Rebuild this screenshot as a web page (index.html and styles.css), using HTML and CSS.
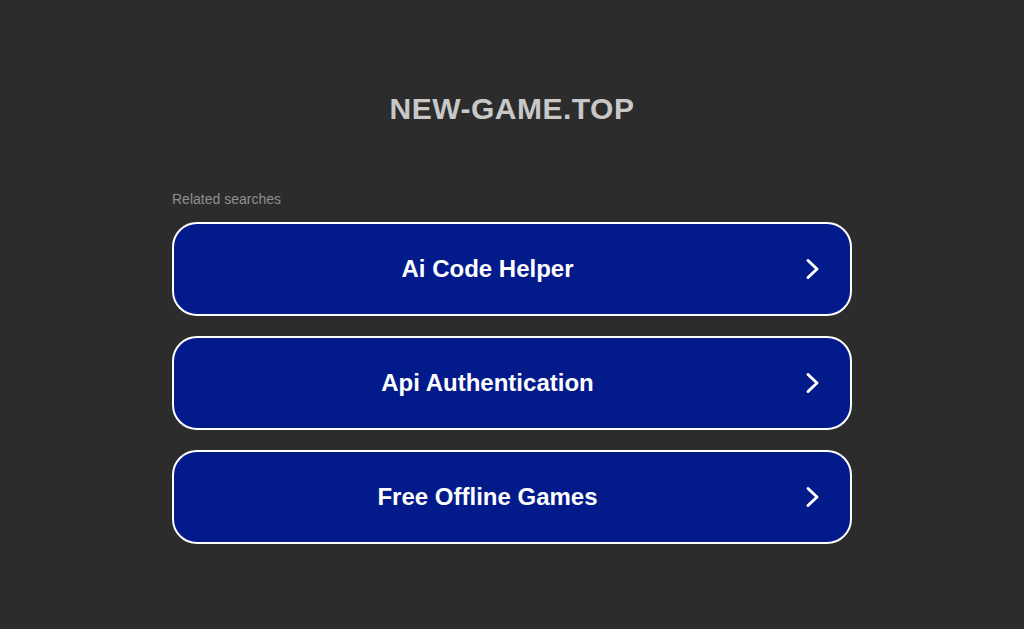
FILE: index.html
```html
<!DOCTYPE html>
<html lang="en">
<head>
  <meta charset="UTF-8">
  <title>new-game.top</title>
  <link rel="stylesheet" href="styles.css">
</head>
<body>

  <h1 class="domain">NEW-GAME.TOP</h1>

  <div class="related">
    <p class="related-title">Related searches</p>

    <a class="search-link" href="#">
      <span class="search-text">Ai Code Helper</span>
      <svg class="arrow" viewBox="0 0 24 24" width="24" height="24"><path d="M7 3.5 L16 12 L7 20.5" /></svg>
    </a>

    <a class="search-link" href="#">
      <span class="search-text">Api Authentication</span>
      <svg class="arrow" viewBox="0 0 24 24" width="24" height="24"><path d="M7 3.5 L16 12 L7 20.5" /></svg>
    </a>

    <a class="search-link" href="#">
      <span class="search-text">Free Offline Games</span>
      <svg class="arrow" viewBox="0 0 24 24" width="24" height="24"><path d="M7 3.5 L16 12 L7 20.5" /></svg>
    </a>
  </div>

</body>
</html>
```

FILE: styles.css
```css
body {
  margin: 0;
  background: #2c2c2c;
  font-family: Arial, "Liberation Sans", sans-serif;
}
.domain {
  margin: 0;
  padding-top: 90px;
  font-size: 30px;
  line-height: 37px;
  text-align: center;
  color: #c8c8c8;
  letter-spacing: 0.5px;
}
.related {
  width: 680px;
  margin: 64px auto 0;
}
.related-title {
  margin: 0 0 15px;
  font-size: 14px;
  line-height: 16px;
  color: #8f8f8f;
}
.search-link {
  display: flex;
  align-items: center;
  height: 90px;
  margin-bottom: 20px;
  padding-right: 25px;
  background: #021a8a;
  border: 2px solid #fff;
  border-radius: 25px;
  color: #fff;
  text-decoration: none;
}
.search-text {
  flex: 1;
  text-align: center;
  font-size: 24px;
  font-weight: bold;
}
.arrow {
  fill: none;
  stroke: #fff;
  stroke-width: 3;
  stroke-linecap: round;
  stroke-linejoin: round;
}
```
